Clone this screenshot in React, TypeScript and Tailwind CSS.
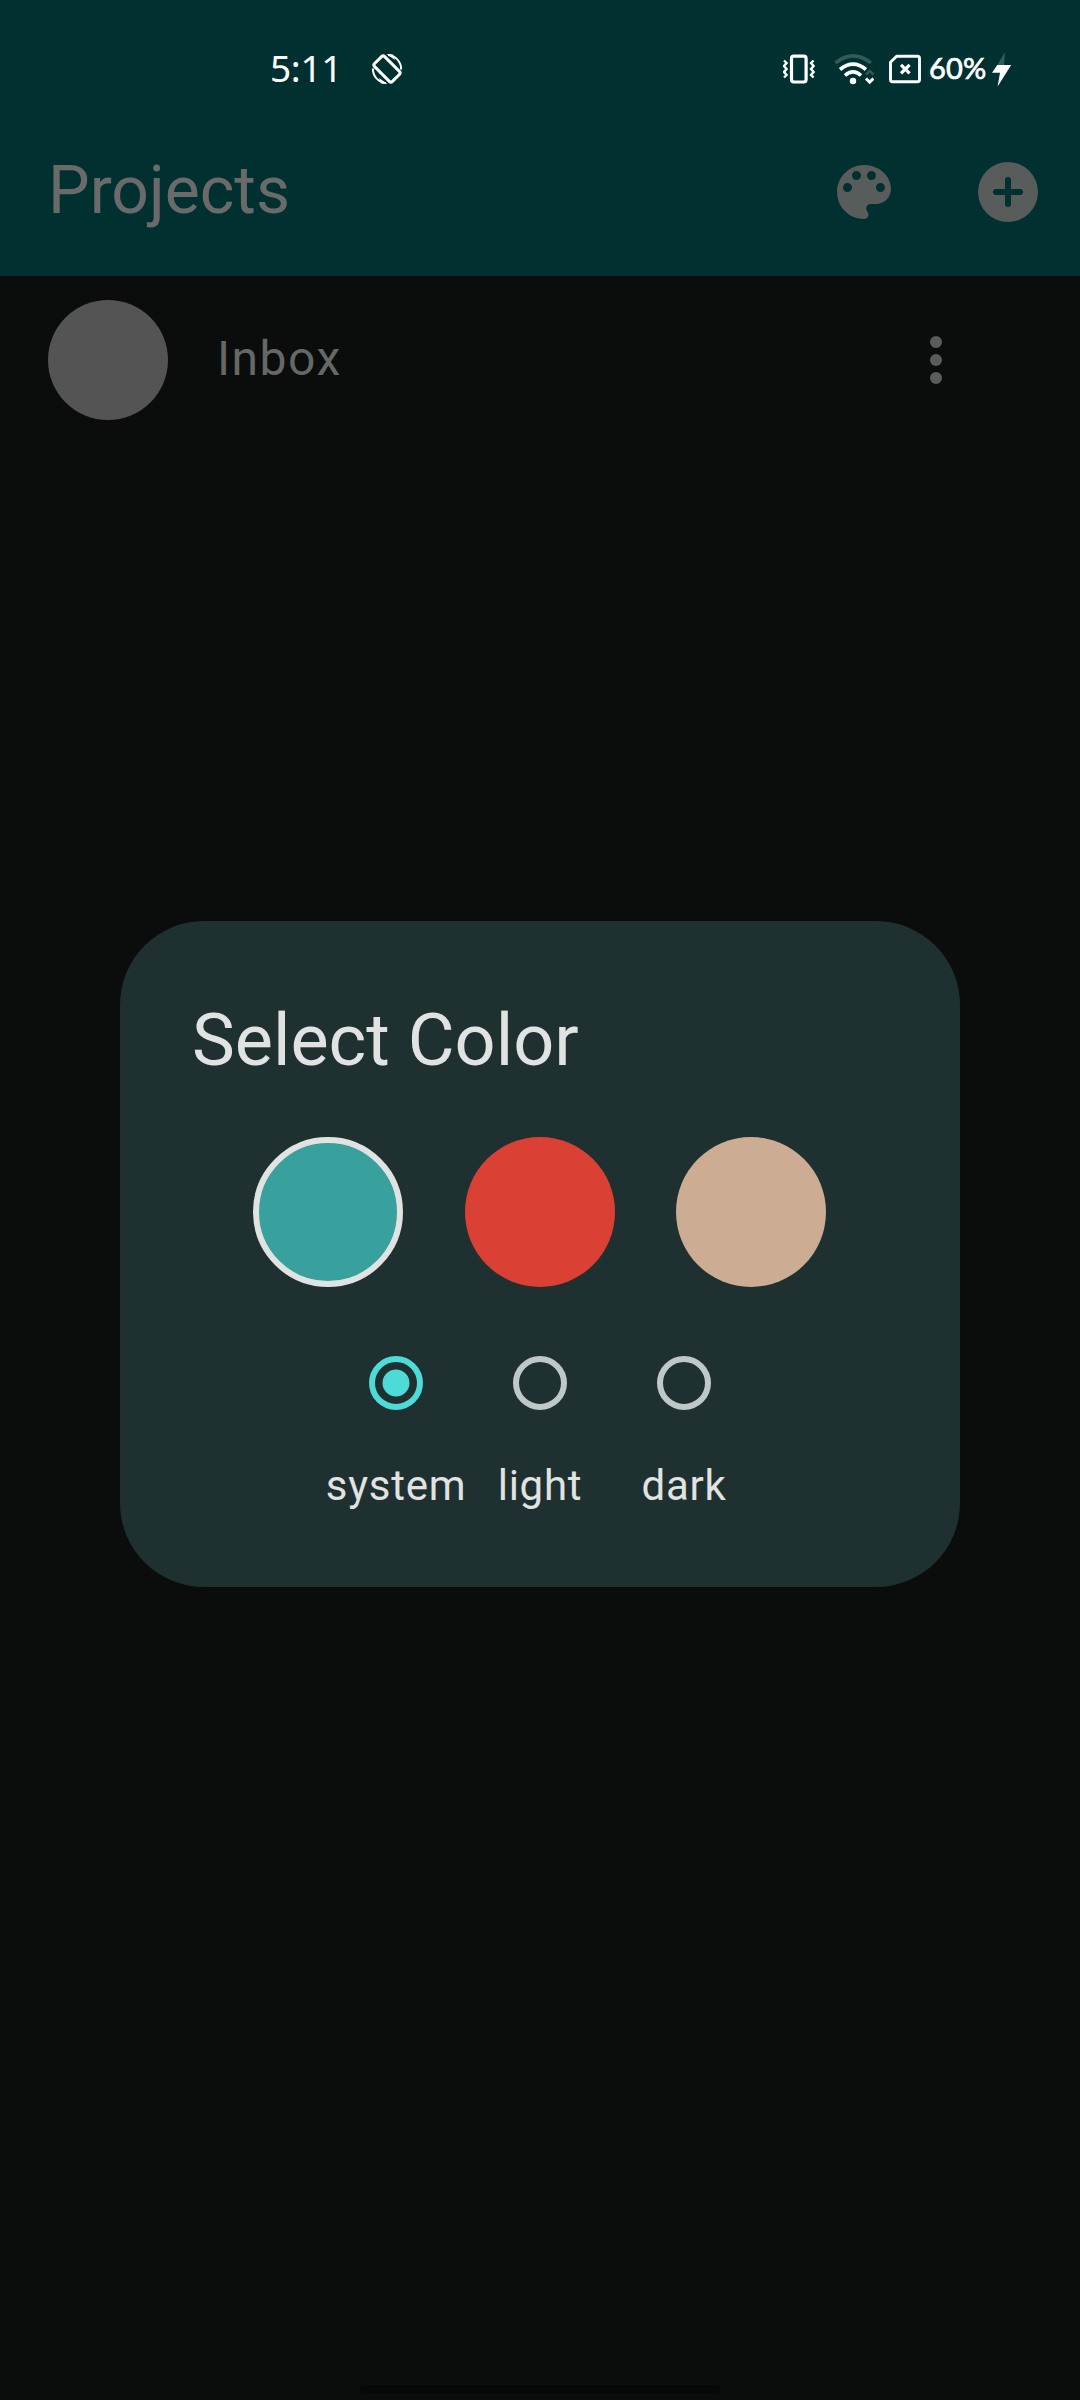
const swatches = [
  { name: "teal", className: "bg-[#39a19d] border-6 border-[#e0e3e2]" },
  { name: "red", className: "bg-[#db4035] ml-[62px]" },
  { name: "tan", className: "bg-[#ccac93] ml-[61px]" },
];

const modes = ["system", "light", "dark"];

function RotationIcon() {
  return (
    <svg className="ml-[33px] h-8 w-8 shrink-0" viewBox="0 0 32 32" fill="none" stroke="white">
      <rect x="3.4" y="8.9" width="25.2" height="14.2" rx="2.2" strokeWidth="3" transform="rotate(45 16 16)" />
      <path d="M17 1.900A14.100 14.100 0 0 1 30.100 16.500M15 30.100A14.100 14.100 0 0 1 1.900 15.500" strokeWidth="2" />
      <path d="M15.500 1l6.500 .600 2 5.500zM16.500 31l-6.500-.600-2-5.500z" fill="white" stroke="none" />
    </svg>
  );
}

function VibrateIcon() {
  return (
    <svg className="h-8 w-8 shrink-0" viewBox="783 53 32 32" fill="none" stroke="white">
      <rect x="791.500" y="56.200" width="14.600" height="25.800" rx="2.400" strokeWidth="3.200" />
      <path d="M784 60.500l2.600 2.500-2.600 3 2.600 3-2.600 3 2.600 3-2.600 2.500" strokeWidth="2.400" />
      <path d="M813.600 60.500l-2.600 2.500 2.600 3-2.600 3 2.600 3-2.600 3 2.600 2.500" strokeWidth="2.400" />
    </svg>
  );
}

function WifiIcon() {
  return (
    <svg className="ml-[19px] h-8 w-10 shrink-0" viewBox="834 53 40 32" fill="none" stroke="white" strokeWidth="3.600">
      <path d="M835.500 62.800Q853 48.800 870.800 62.800" stroke="#335958" />
      <path d="M840 69.500Q853 58.800 866 69.500" />
      <path d="M845 75.500Q853 68.200 861 75.500" />
      <circle cx="853" cy="81" r="3.200" fill="white" stroke="none" />
      <path d="M866 74.500l3.700-3.600 3.700 3.600" stroke="#335958" strokeWidth="2.500" />
      <path d="M866 78.500l3.700 3.600 3.700-3.600" strokeWidth="3" />
    </svg>
  );
}

function SimIcon() {
  return (
    <svg className="ml-[14px] h-8 w-[34px] shrink-0" viewBox="888 53 34 32" fill="none" stroke="white" strokeWidth="2.900">
      <path d="M896.600 56.200H917.500Q919.500 56.200 919.500 58.400V79.700Q919.500 81.700 917.500 81.700H892.600Q890.500 81.700 890.500 79.700V62.300Z" strokeLinejoin="round" />
      <path d="M901 64.800l8.600 8.600M909.600 64.800l-8.600 8.600" strokeWidth="3.200" />
    </svg>
  );
}

function BoltIcon() {
  return (
    <svg className="ml-[5px] h-9 w-[21px] shrink-0" viewBox="991 51 21 36">
      <path d="M1005 52l-7.700 13h6.700z" fill="#335958" />
      <path d="M997.300 65h13.900L997.600 86.600l2.400-13.800H992z" fill="white" />
    </svg>
  );
}

function StatusBar() {
  return (
    <div className="flex h-[108px] items-center pt-[30px] pl-[270px] text-white">
      <div className="w-[68px] pb-0.5 font-['Noto_Sans'] text-[37px] leading-[48px] tracking-[-0.3px] whitespace-nowrap">
        5:11
      </div>
      <RotationIcon />
      <div className="ml-auto flex items-center pr-[68px]">
        <VibrateIcon />
        <WifiIcon />
        <SimIcon />
        <div className="ml-[7px] w-[57px] pb-0.5 font-['Lato'] text-[29px] leading-[36px] tracking-[0.2px] whitespace-nowrap [-webkit-text-stroke:0.7px_white]">
          60%
        </div>
        <BoltIcon />
      </div>
    </div>
  );
}

function Header() {
  return (
    <header className="h-[276px] bg-[#003030]">
      <StatusBar />
      <div className="flex h-[168px] items-center pr-9 pl-12">
        <h1 className="flex-1 pb-0.5 text-[66px] leading-[84px] text-[#696a69]">Projects</h1>
        <button className="flex size-[144px] items-center justify-center" aria-label="Theme">
          <svg className="size-[72px]" viewBox="0 0 24 24" fill="#585c5b">
            <path d="M12 3c-4.970 0-9 4.030-9 9s4.030 9 9 9c.830 0 1.500-.670 1.500-1.500 0-.390-.150-.740-.390-1.010-.230-.260-.380-.610-.380-.990 0-.830.670-1.500 1.500-1.500H16c2.760 0 5-2.240 5-5 0-4.420-4.030-8-9-8zm-5.500 9c-.830 0-1.500-.670-1.500-1.500S5.670 9 6.500 9 8 9.670 8 10.500 7.330 12 6.500 12zm3-4C8.670 8 8 7.330 8 6.500S8.670 5 9.500 5s1.500.670 1.500 1.500S10.330 8 9.500 8zm5 0c-.830 0-1.500-.670-1.500-1.500S13.670 5 14.500 5s1.500.670 1.500 1.500S15.330 8 14.500 8zm3 4c-.830 0-1.500-.670-1.500-1.500S16.670 9 17.500 9s1.500.670 1.500 1.500-.670 1.500-1.500 1.500z" />
          </svg>
        </button>
        <button className="-mr-9 flex size-[144px] items-center justify-center" aria-label="Add project">
          <svg className="size-[72px]" viewBox="0 0 24 24">
            <circle cx="12" cy="12" r="10" fill="#585c5b" />
            <path d="M12 8v8M8 12h8" stroke="#003030" strokeWidth="2" strokeLinecap="round" />
          </svg>
        </button>
      </div>
    </header>
  );
}

function ProjectRow() {
  return (
    <div className="flex h-[168px] items-center pr-[108px] pl-12">
      <div className="size-[120px] rounded-full bg-[#545454]" />
      <div className="ml-[49px] flex-1 pb-0.5 text-[48px] leading-[72px] tracking-[1.5px] text-[#666867]">Inbox</div>
      <button className="flex size-[72px] flex-col items-center justify-center gap-1.5" aria-label="More">
        <span className="size-3 rounded-full bg-[#585c5b]" />
        <span className="size-3 rounded-full bg-[#585c5b]" />
        <span className="size-3 rounded-full bg-[#585c5b]" />
      </button>
    </div>
  );
}

function ColorDialog() {
  return (
    <div className="h-[666px] w-[840px] rounded-[84px] bg-[#1f3030] p-[72px] text-[#e0e3e2]">
      <h2 className="text-[72px] leading-[96px]">Select Color</h2>
      <div className="mt-12 flex pl-[61px]">
        {swatches.map((s) => (
          <div key={s.name} className={"size-[150px] rounded-full " + s.className} />
        ))}
      </div>
      <div className="mt-6 flex justify-center">
        {modes.map((mode) => (
          <div key={mode} className="flex w-[144px] flex-col items-center">
            <div className="flex size-[144px] items-center justify-center">
              {mode === "system" ? (
                <div className="flex size-[54px] items-center justify-center rounded-full border-6 border-[#4ddbd8]">
                  <svg className="size-[28px]" viewBox="0 0 28 28">
                    <circle cx="14" cy="14" r="13.500" fill="#4ddbd8" />
                  </svg>
                </div>
              ) : (
                <div className="size-[54px] rounded-full border-6 border-[#bec9c7]" />
              )}
            </div>
            <div className="pt-px text-[42px] leading-[60px] tracking-[0.75px]">{mode}</div>
          </div>
        ))}
      </div>
    </div>
  );
}

export default function App() {
  return (
    <div className="relative flex h-[2400px] w-[1080px] flex-col overflow-hidden bg-[#0a0d0c] font-['Roboto',sans-serif]">
      <Header />
      <ProjectRow />
      <div className="mt-auto mb-1.5 h-[9px] w-[360px] self-center rounded-full bg-[#060807]" />
      <div className="absolute inset-x-0 top-[921px] flex justify-center">
        <ColorDialog />
      </div>
    </div>
  );
}
